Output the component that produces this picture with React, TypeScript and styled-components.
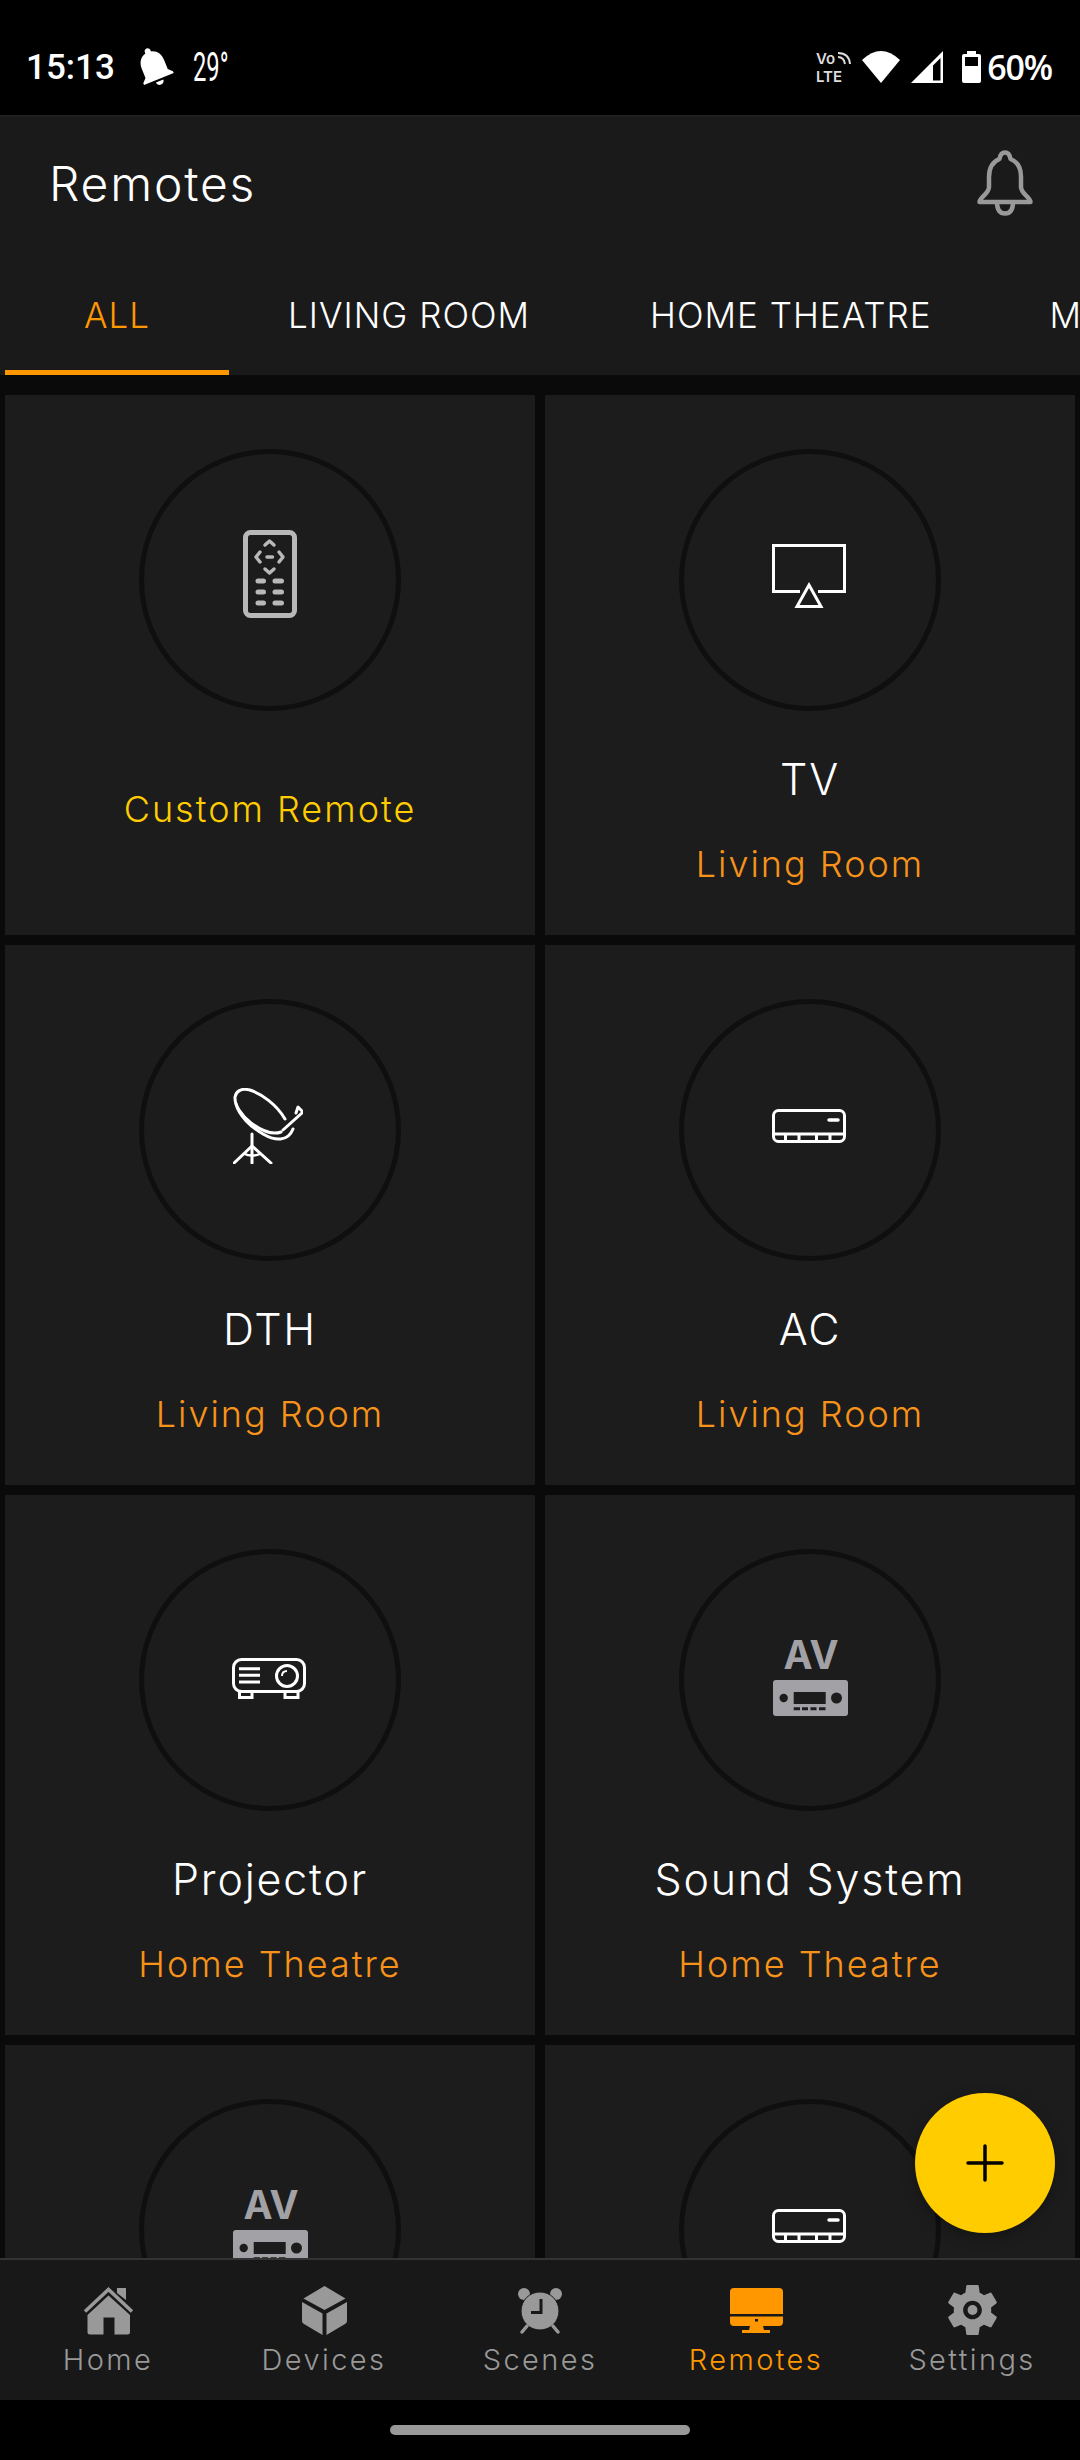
import React, { FC } from 'react';
import styled, { createGlobalStyle } from 'styled-components';

const GlobalStyle = createGlobalStyle`
    html, body { margin: 0; padding: 0; background: #000; }
    * { box-sizing: border-box; }
`;

const Screen = styled.div`
    position: relative;
    width: 1080px;
    height: 2460px;
    display: flex;
    flex-direction: column;
    overflow: hidden;
    background: #000;
    font-family: Inter, "Liberation Sans", sans-serif;
    font-weight: 300;
`;

const StatusBar = styled.div`
    flex: 0 0 115px;
    display: flex;
    align-items: center;
    justify-content: space-between;
    padding: 18px 28px 0 26px;
    background: #000;
    color: #fff;
`;
const StatusGroup = styled.div`
    display: flex;
    align-items: center;
`;
const Clock = styled.span`
    font: 500 35px Roboto, sans-serif;
    margin-right: 21px;
    position: relative;
    top: 1px;
`;
const Temp = styled.span`
    display: inline-block;
    width: 37px;
    margin-left: 21px;
    font: 400 41px Roboto, sans-serif;
    transform: scaleX(0.58);
    transform-origin: left center;
    white-space: nowrap;
`;
const Percent = styled.span`
    font: 600 34px "Open Sans", sans-serif;
    margin-left: 6px;
    letter-spacing: -1.2px;
`;
const Spaced = styled.span<{ $gap: number }>`
    display: flex;
    margin-right: ${(p) => p.$gap}px;
`;

const Header = styled.div`
    flex: 0 0 145px;
    display: flex;
    align-items: center;
    justify-content: space-between;
    padding: 0 47px 10px 49px;
    background: #1a1a1a;
    border-top: 2px solid #1f1f1f;
`;
const Title = styled.h1`
    margin: 0;
    font-size: 48px;
    font-weight: 300;
    letter-spacing: 1.8px;
    color: #fff;
`;
const BellSlot = styled.div`
    display: flex;
    margin-bottom: 2px;
`;

const Tabs = styled.div`
    flex: 0 0 115px;
    display: flex;
    padding-left: 5px;
    background: #1a1a1a;
    overflow: hidden;
`;
const Tab = styled.div<{ $active?: boolean; $pad: number }>`
    flex: none;
    height: 115px;
    padding: 0 ${(p) => p.$pad}px;
    display: flex;
    align-items: center;
    font-size: 35px;
    font-weight: 300;
    letter-spacing: 1px;
    white-space: nowrap;
    color: ${(p) => (p.$active ? '#ff9800' : '#fff')};
    border-bottom: 5px solid ${(p) => (p.$active ? '#ff9800' : 'transparent')};
`;

const Content = styled.div`
    flex: 1;
    min-height: 0;
    overflow: hidden;
    background: #0a0a0a;
    padding: 20px 5px 0;
`;
const Grid = styled.div`
    display: grid;
    grid-template-columns: 530px 530px;
    grid-auto-rows: 540px;
    gap: 10px;
`;
const Card = styled.div`
    display: flex;
    flex-direction: column;
    align-items: center;
    padding-top: 54px;
    background: #1c1c1c;
`;
const Ring = styled.div<{ $lift: number; $nudge: number }>`
    width: 262px;
    height: 262px;
    flex: none;
    display: flex;
    align-items: center;
    justify-content: center;
    padding-bottom: ${(p) => p.$lift}px;
    padding-right: ${(p) => p.$nudge}px;
    border: 5px solid #0f0f0f;
    border-radius: 50%;
`;
const Name = styled.div`
    margin-top: 43px;
    height: 50px;
    line-height: 50px;
    font-size: 43px;
    font-weight: 300;
    letter-spacing: 1.8px;
    color: #fff;
`;
const Room = styled.div<{ $custom?: boolean }>`
    margin-top: ${(p) => (p.$custom ? 75 : 37)}px;
    height: 46px;
    line-height: 46px;
    font-size: 36px;
    font-weight: 300;
    letter-spacing: 2px;
    color: ${(p) => (p.$custom ? '#ffcc00' : '#f7931a')};
`;

const Fab = styled.button`
    position: absolute;
    left: 915px;
    top: 2093px;
    width: 140px;
    height: 140px;
    padding: 0;
    display: flex;
    align-items: center;
    justify-content: center;
    border: none;
    border-radius: 50%;
    background: #ffcc00;
    box-shadow: 0 4px 14px rgba(0, 0, 0, 0.3);
`;

const BottomNav = styled.div`
    flex: 0 0 142px;
    display: grid;
    grid-template-columns: repeat(5, 216px);
    background: #181818;
    border-top: 2px solid #333;
`;
const NavItem = styled.div<{ $active?: boolean }>`
    display: flex;
    flex-direction: column;
    align-items: center;
    color: ${(p) => (p.$active ? '#ff9800' : '#999')};
`;
const NavIconBox = styled.div`
    height: 52px;
    margin-top: 24px;
    display: flex;
    align-items: center;
    justify-content: center;
`;
const NavLabel = styled.div`
    margin-top: 6px;
    font-size: 29px;
    line-height: 36px;
    font-weight: 300;
    letter-spacing: 2.4px;
`;
const GestureArea = styled.div`
    flex: 0 0 60px;
    display: flex;
    justify-content: center;
    padding-top: 25px;
    background: #000;
`;
const GestureBar = styled.div`
    width: 300px;
    height: 10px;
    border-radius: 5px;
    background: #999;
`;

const BellMuteIcon = () => (
    <svg width="36" height="38" viewBox="0 0 36 38" fill="#fff" overflow="visible">
        <g transform="rotate(-22 18 19) translate(-6 -6) scale(2)">
            <path d="M12 22c1.1 0 2-.9 2-2h-4c0 1.1.9 2 2 2zm6-6v-5c0-3.07-1.63-5.64-4.5-6.32V4c0-.83-.67-1.5-1.5-1.5s-1.5.67-1.5 1.5v.68C7.64 5.36 6 7.92 6 11v5l-2 2v1h16v-1l-2-2z" />
        </g>
    </svg>
);
const VolteIcon = () => (
    <svg width="36" height="32" viewBox="0 0 36 32" fill="#ddd" overflow="visible">
        <text x="0" y="13" fontFamily="Inter, sans-serif" fontWeight="600" fontSize="15">Vo</text>
        <text x="0" y="31" fontFamily="Inter, sans-serif" fontWeight="600" fontSize="15">LTE</text>
        <g fill="none" stroke="#ddd" strokeWidth="2">
            <path d="M22 6 Q28 6 29 13" />
            <path d="M22 2 Q33 2 34 13" />
        </g>
    </svg>
);
const WifiIcon = () => (
    <svg width="38" height="32" viewBox="0 0 38 32" fill="#fff">
        <path d="M0 9 Q19 -9 38 9 L19 32 Z" />
    </svg>
);
const SignalIcon = () => (
    <svg width="32" height="32" viewBox="0 0 32 32" fill="#fff">
        <path fillRule="evenodd" d="M0 32 L32 0 V32 Z M22 29.5 H29.5 V7 L22 14.5 Z" />
    </svg>
);
const BatteryIcon = () => (
    <svg width="19" height="32" viewBox="0 0 19 32" fill="#fff">
        <path fillRule="evenodd" d="M5 0 H14 V3 H17 Q19 3 19 5 V30 Q19 32 17 32 H2 Q0 32 0 30 V5 Q0 3 2 3 H5 Z M3 6 V15 H16 V6 Z" />
    </svg>
);
const HeaderBell = () => (
    <svg width="56" height="66" viewBox="0 0 56 66" fill="none" stroke="#999" strokeWidth="4.5" strokeLinejoin="round">
        <path d="M28 2.5 C32 2.5 33 6 33.5 9 C41 12 44 18 44 27 V37 C44 44 53.5 47 53.5 52 H2.5 C2.5 47 12 44 12 37 V27 C12 18 15 12 22.5 9 C23 6 24 2.5 28 2.5 Z" />
        <path d="M20 52 C20 60 23 63.5 28 63.5 C33 63.5 36 60 36 52" />
    </svg>
);

const RemoteIcon = () => (
    <svg width="54" height="88" viewBox="0 0 54 88" fill="none" stroke="#b8b8b8" strokeWidth="5" strokeLinecap="round" strokeLinejoin="round">
        <rect x="2.5" y="2.5" width="49" height="83" rx="5" />
        <g strokeWidth="3.5">
            <path d="M22 15 L26.5 11 L31 15" />
            <path d="M22 39 L26.5 43 L31 39" />
            <path d="M17 22 L13 27 L17 32" />
            <path d="M36 22 L40 27 L36 32" />
            <path d="M24 27 H29.5" />
        </g>
        <g strokeWidth="5">
            <path d="M15 51 H20.5 M32 51 H38.5 M15 62 H20.5 M32 62 H38.5 M15 73 H20.5 M32 73 H38.5" />
        </g>
    </svg>
);
const TvIcon = () => (
    <svg width="74" height="64" viewBox="0 0 74 64" fill="none" stroke="#fff" strokeWidth="3">
        <path d="M28 47.5 H1.5 V1.5 H72.5 V47.5 H46" />
        <path d="M37 41 L49 62.5 H25 Z" />
    </svg>
);
const DishIcon = () => (
    <svg width="70" height="76" viewBox="0 0 70 76" fill="none" stroke="#fff" strokeWidth="3" strokeLinecap="round" strokeLinejoin="round">
        <path d="M52 31 C44 17 28 5 16 1.8 C8 0 3 3.5 2 9 C1.5 17 8 27 18 35 C29 43 40 47 48 44" />
        <path d="M3 16 C6 28 18 39 30 46 C42 53 55 54 60 41" />
        <path d="M50 42 L70 24 L65 19 L63 25" />
        <path d="M19 46 V75" />
        <path d="M1 75 L19 58 L38 75" />
        <path d="M12 66 C15 68 23 68 27 66" strokeWidth="2.5" />
    </svg>
);
const AcIcon = () => (
    <svg width="74" height="34" viewBox="0 0 74 34" fill="none" stroke="#fff" strokeWidth="3">
        <rect x="1.5" y="1.5" width="71" height="31" rx="5" />
        <path d="M2 25 H72" />
        <path d="M13.5 25 V32 M27 25 V32 M44.5 25 V32 M58 25 V32" />
        <path d="M57 11 H66" strokeLinecap="round" strokeWidth="3.5" />
    </svg>
);
const ProjectorIcon = () => (
    <svg width="74" height="41" viewBox="0 0 74 41" fill="none" stroke="#fff" strokeWidth="3">
        <rect x="1.5" y="1.5" width="71" height="32" rx="8" />
        <path d="M7 10.7 H28 M7 17.3 H28 M7 24 H28" />
        <circle cx="55" cy="18" r="10.5" />
        <path d="M50 18 C50 15 52 13 55 13" strokeWidth="2" />
        <path d="M7.5 34 V39.5 H20 V34 M53 34 V39.5 H66 V34" />
    </svg>
);
const AvIcon = () => (
    <svg width="75" height="76" viewBox="0 0 75 76" overflow="visible">
        <text x="38" y="29" textAnchor="middle" fontFamily="Inter, sans-serif" fontWeight="700" fontSize="39" fill="#a2a2a6">AV</text>
        <rect x="0" y="40" width="75" height="36" rx="3" fill="#a2a2a6" />
        <circle cx="10.7" cy="58" r="4.2" fill="#1c1c1c" />
        <circle cx="63.5" cy="58" r="5.5" fill="#1c1c1c" />
        <rect x="20.7" y="52" width="32" height="12" fill="#1c1c1c" />
        <path d="M20.7 68.8 H27 M29 68.8 H35 M37.5 68.8 H43.5 M46 68.8 H52.5" stroke="#1c1c1c" strokeWidth="3" />
    </svg>
);
const PlusIcon = () => (
    <svg width="38" height="38" viewBox="0 0 38 38" stroke="#000" strokeWidth="3.5" strokeLinecap="round">
        <path d="M19 2 V36 M2 19 H36" />
    </svg>
);

const HomeIcon = () => (
    <svg width="51" height="49" viewBox="0 0 51 49" fill="currentColor">
        <path d="M34 2 H43 V14 L34 7 Z" />
        <path d="M2 25.5 L25.5 3.5 L49 25.5" fill="none" stroke="currentColor" strokeWidth="3.5" />
        <path fillRule="evenodd" d="M25.5 9.5 L47 29 V46 Q47 48.5 44.5 48.5 H7 Q4.5 48.5 4.5 46 V29 Z M20.5 31.5 V48.5 H31.5 V31.5 Z" />
    </svg>
);
const CubeIcon = () => (
    <svg width="45" height="49" viewBox="0 0 45 49" fill="currentColor">
        <path d="M22.5 0 L43.5 12.5 L22.5 24 L1.5 12.5 Z" />
        <path d="M0 16 L20.5 27.5 V49 L2 38 Q0 37 0 35 Z" />
        <path d="M45 16 L24.5 27.5 V49 L43 38 Q45 37 45 35 Z" />
    </svg>
);
const AlarmIcon = () => (
    <svg width="46" height="50" viewBox="0 0 46 50" fill="currentColor">
        <circle cx="7" cy="9" r="6" />
        <circle cx="39" cy="9" r="6" />
        <circle cx="23" cy="26" r="19" stroke="#181818" strokeWidth="1" />
        <path d="M10 41 L5 47 M36 41 L41 47" stroke="currentColor" strokeWidth="3.5" strokeLinecap="round" />
        <path d="M24 14 V27.5 H14" fill="none" stroke="#181818" strokeWidth="3" />
    </svg>
);
const MonitorIcon = () => (
    <svg width="53" height="45" viewBox="0 0 53 45" fill="currentColor">
        <path d="M0 26 V4 Q0 0 4 0 H49 Q53 0 53 4 V26 Z" />
        <path fillRule="evenodd" d="M0 28.5 H53 V34 Q53 38 49 38 H33 L34 42 H40 V45 H12 V42 H19 L20 38 H4 Q0 38 0 34 Z M25 31 V33.5 H28 V31 Z" />
    </svg>
);
const GearIcon = () => (
    <svg width="49" height="52" viewBox="2.6 2 18.8 20" fill="currentColor">
        <path d="M19.14 12.94c.04-.3.06-.61.06-.94 0-.32-.02-.64-.07-.94l2.03-1.58c.18-.14.23-.41.12-.61l-1.92-3.32c-.12-.22-.37-.29-.59-.22l-2.39.96c-.5-.38-1.03-.7-1.62-.94l-.36-2.54c-.04-.24-.24-.41-.48-.41h-3.84c-.24 0-.43.17-.47.41l-.36 2.54c-.59.24-1.13.57-1.62.94l-2.39-.96c-.22-.08-.47 0-.59.22L2.74 8.87c-.12.21-.08.47.12.61l2.03 1.58c-.05.3-.09.63-.09.94s.02.64.07.94l-2.03 1.58c-.18.14-.23.41-.12.61l1.92 3.32c.12.22.37.29.59.22l2.39-.96c.5.38 1.03.7 1.62.94l.36 2.54c.05.24.24.41.48.41h3.84c.24 0 .44-.17.47-.41l.36-2.54c.59-.24 1.13-.56 1.62-.94l2.39.96c.22.08.47 0 .59-.22l1.92-3.32c.12-.22.07-.47-.12-.61l-2.01-1.58zM12 15.6c-1.98 0-3.6-1.62-3.6-3.6s1.62-3.6 3.6-3.6 3.6 1.62 3.6 3.6-1.62 3.6-3.6 3.6z" />
        <circle cx="12" cy="12" r="1.9" />
    </svg>
);

type RemoteCard = {
    id: string;
    icon: FC;
    lift: number;
    nudge: number;
    name?: string;
    room?: string;
    custom?: boolean;
};

// the last row runs under the bottom nav, its labels never show
const remotes: RemoteCard[] = [
    { id: 'custom', icon: RemoteIcon, lift: 12, nudge: 0, room: 'Custom Remote', custom: true },
    { id: 'tv', icon: TvIcon, lift: 8, nudge: 3, name: 'TV', room: 'Living Room' },
    { id: 'dth', icon: DishIcon, lift: 8, nudge: 4, name: 'DTH', room: 'Living Room' },
    { id: 'ac', icon: AcIcon, lift: 8, nudge: 3, name: 'AC', room: 'Living Room' },
    { id: 'projector', icon: ProjectorIcon, lift: 4, nudge: 3, name: 'Projector', room: 'Home Theatre' },
    { id: 'sound', icon: AvIcon, lift: 4, nudge: 0, name: 'Sound System', room: 'Home Theatre' },
    { id: 'av2', icon: AvIcon, lift: 4, nudge: 0 },
    { id: 'ac2', icon: AcIcon, lift: 8, nudge: 3 },
];

const tabs = [
    { label: 'ALL', pad: 79, active: true },
    { label: 'LIVING ROOM', pad: 59 },
    { label: 'HOME THEATRE', pad: 61 },
    { label: 'M', pad: 57 },
];

const navItems = [
    { label: 'Home', icon: HomeIcon },
    { label: 'Devices', icon: CubeIcon },
    { label: 'Scenes', icon: AlarmIcon },
    { label: 'Remotes', icon: MonitorIcon, active: true },
    { label: 'Settings', icon: GearIcon },
];

const App = () => (
    <Screen>
        <GlobalStyle />
        <StatusBar>
            <StatusGroup>
                <Clock>15:13</Clock>
                <BellMuteIcon />
                <Temp>29°</Temp>
            </StatusGroup>
            <StatusGroup>
                <Spaced $gap={10}><VolteIcon /></Spaced>
                <Spaced $gap={11}><WifiIcon /></Spaced>
                <Spaced $gap={19}><SignalIcon /></Spaced>
                <BatteryIcon />
                <Percent>60%</Percent>
            </StatusGroup>
        </StatusBar>
        <Header>
            <Title>Remotes</Title>
            <BellSlot><HeaderBell /></BellSlot>
        </Header>
        <Tabs>
            {tabs.map((t) => (
                <Tab key={t.label} $active={t.active} $pad={t.pad}>{t.label}</Tab>
            ))}
        </Tabs>
        <Content>
            <Grid>
                {remotes.map((r) => (
                    <Card key={r.id}>
                        <Ring $lift={r.lift} $nudge={r.nudge}><r.icon /></Ring>
                        {r.name && <Name>{r.name}</Name>}
                        {r.room && <Room $custom={r.custom}>{r.room}</Room>}
                    </Card>
                ))}
            </Grid>
        </Content>
        <BottomNav>
            {navItems.map((n) => (
                <NavItem key={n.label} $active={n.active}>
                    <NavIconBox><n.icon /></NavIconBox>
                    <NavLabel>{n.label}</NavLabel>
                </NavItem>
            ))}
        </BottomNav>
        <GestureArea><GestureBar /></GestureArea>
        <Fab><PlusIcon /></Fab>
    </Screen>
);

export default App;
